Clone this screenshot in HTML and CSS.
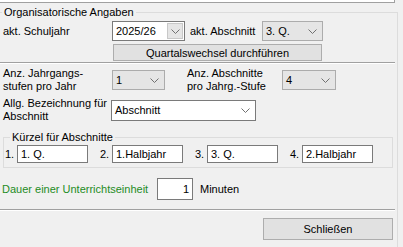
FILE: index.html
```html
<!DOCTYPE html>
<html lang="de">
  <head>
    <meta charset="UTF-8" />
    <title>Organisatorische Angaben</title>
    <link rel="stylesheet" href="styles.css">
  </head>
  <body>
    <div class="topstrip"></div>

    <div class="frame">
      <div class="legend">Organisatorische Angaben</div>

      <div class="row row1">
        <span class="lbl col1">akt. Schuljahr</span>
        <div class="combo edit schuljahr">
          <span class="val">2025/26</span>
          <span class="dropbtn">
            <svg width="9" height="5" viewBox="0 0 9 5"><path d="M0.5 0.5 L4.5 4.5 L8.5 0.5" fill="none" stroke="#707070" stroke-width="1"/></svg>
          </span>
        </div>
        <span class="lbl abschnittLbl">akt. Abschnitt</span>
        <div class="combo list abschnitt">
          <span class="val">3. Q.</span>
          <svg width="9" height="5" viewBox="0 0 9 5"><path d="M0.5 0.5 L4.5 4.5 L8.5 0.5" fill="none" stroke="#707070" stroke-width="1"/></svg>
        </div>
      </div>

      <div class="row row2">
        <button class="btn wechsel">Quartalswechsel durchführen</button>
      </div>

      <div class="sep"></div>

      <div class="row row3">
        <span class="lbl col1 two">Anz. Jahrgangs-<br>stufen pro Jahr</span>
        <div class="combo list stufen">
          <span class="val">1</span>
          <svg width="9" height="5" viewBox="0 0 9 5"><path d="M0.5 0.5 L4.5 4.5 L8.5 0.5" fill="none" stroke="#707070" stroke-width="1"/></svg>
        </div>
        <span class="lbl two anzLbl">Anz. Abschnitte<br>pro Jahrg.-Stufe</span>
        <div class="combo list anzahl">
          <span class="val">4</span>
          <svg width="9" height="5" viewBox="0 0 9 5"><path d="M0.5 0.5 L4.5 4.5 L8.5 0.5" fill="none" stroke="#707070" stroke-width="1"/></svg>
        </div>
      </div>

      <div class="row row4">
        <span class="lbl col1b two">Allg. Bezeichnung für<br>Abschnitt</span>
        <div class="combo edit bezeichnung">
          <span class="val">Abschnitt</span>
          <svg width="9" height="5" viewBox="0 0 9 5"><path d="M0.5 0.5 L4.5 4.5 L8.5 0.5" fill="none" stroke="#707070" stroke-width="1"/></svg>
        </div>
      </div>

      <div class="kgroup">
        <div class="legend klegend">Kürzel für Abschnitte</div>
        <div class="row krow">
          <span class="num">1.</span><span class="kin">1. Q.</span>
          <span class="num">2.</span><span class="kin">1.Halbjahr</span>
          <span class="num">3.</span><span class="kin">3. Q.</span>
          <span class="num">4.</span><span class="kin">2.Halbjahr</span>
        </div>
      </div>

      <div class="row dauer">
        <span class="gruen">Dauer einer Unterrichtseinheit</span>
        <span class="zahl">1</span>
        <span class="lbl">Minuten</span>
      </div>

      <div class="sep sep2"></div>

      <div class="row foot">
        <button class="btn schliessen">Schließen</button>
      </div>
    </div>
  </body>
</html>
```

FILE: styles.css
```css
body,
html {
  margin: 0;
  padding: 0;
}

body {
  width: 403px;
  height: 247px;
  overflow: hidden;
  background-color: #f0f0f0;
  font-family: "Liberation Sans", Arial, sans-serif;
  font-size: 11px;
  color: #000;
}

.topstrip {
  width: 394px;
  height: 2px;
  background-color: #fff;
  border-right: 1px solid #a0a0a0;
  border-bottom: 1px solid #a0a0a0;
}

.frame {
  margin-top: 9px;
  width: 397px;
  height: 240px;
  border-top: 1px solid #dcdcdc;
  border-right: 1px solid #dcdcdc;
}

.legend {
  width: max-content;
  margin-top: -7px;
  margin-left: 2px;
  padding: 0 2px;
  line-height: 13px;
  background-color: #f0f0f0;
}

.row {
  display: flex;
  align-items: center;
}

.lbl {
  white-space: nowrap;
}

.two {
  line-height: 13px;
}

.col1 {
  width: 109px;
  padding-left: 3px;
}

.col1b {
  width: 108px;
  padding-left: 3px;
}

/* combo boxes */
.combo {
  box-sizing: border-box;
  height: 20px;
  display: flex;
  align-items: center;
  justify-content: space-between;
  padding-left: 3px;
  padding-right: 5px;
}

.combo.edit {
  background-color: #fff;
  border: 1px solid #7a7a7a;
}

.combo.list {
  background-color: #e5e5e5;
  border: 1px solid #acacac;
}

.schuljahr {
  width: 73px;
  padding-right: 1px;
}

.dropbtn {
  box-sizing: border-box;
  width: 16px;
  height: 16px;
  background-color: #e5e5e5;
  border: 1px solid #c8c8c8;
  display: flex;
  align-items: center;
  justify-content: center;
}

.abschnittLbl {
  width: 72px;
  margin-left: 5px;
}

.abschnitt {
  width: 61px;
}

.row1 {
  margin-top: 2px;
  height: 20px;
}

.row2 {
  margin-top: 3px;
  padding-left: 113px;
}

.btn {
  box-sizing: border-box;
  font-family: inherit;
  font-size: 11px;
  color: #000;
  background-color: #e1e1e1;
  border: 1px solid #adadad;
  border-radius: 0;
  padding: 0;
}

.wechsel {
  width: 209px;
  height: 17px;
  line-height: 14px;
}

.sep {
  width: 395px;
  height: 0;
  margin-top: 1px;
  border-top: 1px solid #a0a0a0;
  border-bottom: 1px solid #fff;
}

.row3 {
  margin-top: 3px;
  height: 26px;
}

.stufen {
  width: 53px;
}

.anzLbl {
  width: 95px;
  margin-left: 22px;
}

.anzahl {
  width: 54px;
}

.row4 {
  margin-top: 4px;
  height: 26px;
}

.bezeichnung {
  width: 145px;
  height: 21px;
}

/* Kürzel group */
.kgroup {
  box-sizing: border-box;
  width: 390px;
  margin-top: 14px;
  margin-left: 3px;
  padding-bottom: 4px;
  border: 1px solid #dcdcdc;
}

.klegend {
  margin-left: 6px;
}

.krow {
  margin-top: 1px;
  height: 18px;
}

.num {
  width: 12px;
  margin-left: 12px;
}

.num:first-child {
  margin-left: 1px;
}

.kin {
  box-sizing: border-box;
  width: 71px;
  height: 18px;
  line-height: 16px;
  padding-left: 3px;
  background-color: #fff;
  border: 1px solid #7a7a7a;
}

.dauer {
  margin-top: 10px;
  height: 22px;
  padding-left: 2px;
}

.gruen {
  width: 155px;
  white-space: nowrap;
  color: #1e8c1e;
}

.zahl {
  box-sizing: border-box;
  width: 36px;
  height: 22px;
  line-height: 20px;
  padding-right: 3px;
  text-align: right;
  background-color: #fff;
  border: 1px solid #7a7a7a;
  margin-right: 7px;
}

.sep2 {
  margin-top: 9px;
}

.foot {
  margin-top: 7px;
  padding-left: 263px;
}

.schliessen {
  width: 130px;
  height: 22px;
}
```
